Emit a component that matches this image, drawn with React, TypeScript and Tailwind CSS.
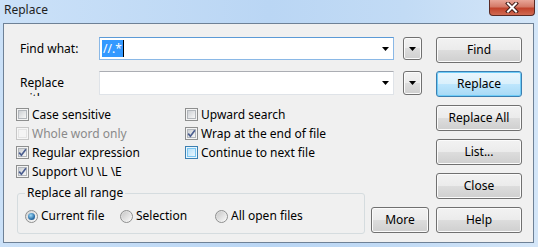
import React from 'react'

function Arrow() {
    return (
        <svg width="7" height="4" viewBox="0 0 7 4">
            <path d="M0 0 H7 L3.5 4 Z" fill="#000" />
        </svg>
    )
}

function Btn({ children, primary, className = "" }: { children: React.ReactNode; primary?: boolean; className?: string }) {
    return (
        <div
            className={`flex items-center justify-center rounded-[3px] border leading-none ${primary
                ? "border-[#3c7fb1] bg-[linear-gradient(to_bottom,#eaf6fd_0%,#d9f0fc_50%,#bee6fd_50%,#a7d9f5_100%)] shadow-[inset_0_0_0_1px_#6fcdf8]"
                : "border-[#707070] bg-[linear-gradient(to_bottom,#f2f2f2_0%,#ebebeb_50%,#dddddd_50%,#cfcfcf_100%)] shadow-[inset_0_0_0_1px_#fbfbfb]"
                } ${className}`}
        >
            {children}
        </div>
    )
}

function Check({ label, checked, disabled, hot }: { label: string; checked?: boolean; disabled?: boolean; hot?: boolean }) {
    const outer = disabled
        ? "border-[#c7c7c7] bg-[#f6f6f6]"
        : hot
            ? "border-[#3c7fb1] bg-[#eaf6fd]"
            : "border-[#8e8f8f] bg-[#f4f4f4]"
    const inner = disabled
        ? "border-[#e3e3e3] bg-[#f4f4f4]"
        : hot
            ? "border-[#7ac6f2] bg-[linear-gradient(135deg,#b7e0f9,#e9f6fe)]"
            : "border-[#b2b6bb] bg-[linear-gradient(135deg,#cdd0d4,#f7f7f7)]"
    return (
        <div className="flex h-[19px] items-center gap-[3px]">
            <span className={`relative flex h-[13px] w-[13px] shrink-0 items-center justify-center border ${outer}`}>
                <span className={`h-[9px] w-[9px] border ${inner}`} />
                {checked && (
                    <svg className="absolute inset-0" width="11" height="11" viewBox="0 0 11 11">
                        <path d="M2.2 5.6 L4.4 8.2 L8.9 2.2" fill="none" stroke="#4a5d8f" strokeWidth="1.7" />
                    </svg>
                )}
            </span>
            <span className={`leading-none ${disabled ? "text-[#8a8a8a]" : "text-black"}`}>{label}</span>
        </div>
    )
}

function Radio({ label, checked, className = "" }: { label: string; checked?: boolean; className?: string }) {
    return (
        <div className={`flex h-[16px] items-center gap-[3px] ${className}`}>
            <span className="flex h-[13px] w-[13px] shrink-0 items-center justify-center rounded-full border border-[#8e8f8f] bg-[linear-gradient(135deg,#d4d4d4,#fbfbfb)]">
                {checked ? (
                    <span className="h-[7px] w-[7px] rounded-full bg-[radial-gradient(circle_at_40%_35%,#9fdcfa,#2c6fa8_60%,#1b4a78)]" />
                ) : (
                    <span className="h-[9px] w-[9px] rounded-full bg-[linear-gradient(135deg,#c9c9c9,#f6f6f6)]" />
                )}
            </span>
            <span className="leading-none">{label}</span>
        </div>
    )
}

export default function App() {
    return (
        <div className="flex h-[247px] w-[538px] flex-col overflow-hidden bg-[linear-gradient(to_right,#cbe1f8,#bad6f4_50%,#c2dbf5_75%,#d4e6f8)] font-['Noto_Sans',sans-serif] text-[12px] text-black">
            {/* title bar */}
            <div className="flex h-[23px] shrink-0 items-start justify-between">
                <span className="pl-[4px] pt-[2px] leading-[16px] text-[#1e1e1e]">Replace</span>
                <div className="mr-[3px] flex h-[16px] w-[46px] items-center justify-center rounded-b-[4px] border border-t-0 border-[#5a2a24] bg-[linear-gradient(to_bottom,#e8a698_0%,#d47a68_45%,#c1432c_55%,#d06a52_100%)]">
                    <svg width="14" height="11" viewBox="0 0 14 11">
                        <path d="M3 1.5 L11 9.5 M11 1.5 L3 9.5" stroke="#3e1a16" strokeWidth="4" strokeLinecap="square" />
                        <path d="M3 1.5 L11 9.5 M11 1.5 L3 9.5" stroke="#fff" strokeWidth="2" strokeLinecap="square" />
                    </svg>
                </div>
            </div>

            {/* client area */}
            <div className="ml-[3px] mr-[4px] h-[220px] shrink-0 border border-[#6e8196] bg-[#f0f0f0] pl-[12px] pt-[13px]">
                <div className="flex">
                    <div className="flex w-[413px] flex-col">
                        <div className="flex h-[23px] items-center">
                            <span className="w-[83px] pl-[4px] leading-none">Find what:</span>
                            <div className="flex h-[23px] w-[295px] items-center border border-[#8ab8e6] border-t-[#5c9ad6] bg-white pl-[2px] pr-[4px]">
                                <span className="flex h-[17px] items-center bg-[#3399ff] px-[1px] leading-none text-white">//.*</span>
                                <span className="h-[17px] w-px bg-black" />
                                <span className="ml-auto flex"><Arrow /></span>
                            </div>
                            <Btn className="ml-[9px] h-[23px] w-[19px]"><Arrow /></Btn>
                        </div>

                        <div className="mt-[11px] flex h-[24px] items-start">
                            {/* the label is clipped by its control height in the original dialog */}
                            <span className="mt-[4px] h-[21px] w-[83px] overflow-hidden pl-[4px] leading-[16px]">Replace<br />with:</span>
                            <div className="flex h-[24px] w-[295px] items-center border border-[#dfe3e8] border-t-[#abadb3] bg-white pr-[4px]">
                                <span className="ml-auto flex"><Arrow /></span>
                            </div>
                            <Btn className="ml-[9px] h-[24px] w-[19px]"><Arrow /></Btn>
                        </div>

                        <div className="mt-[10px] grid grid-cols-[169px_1fr]">
                            <Check label="Case sensitive" />
                            <Check label="Upward search" />
                            <Check label="Whole word only" disabled />
                            <Check label="Wrap at the end of file" checked />
                            <Check label="Regular expression" checked />
                            <Check label="Continue to next file" hot />
                            <Check label="Support \U \L \E" checked />
                        </div>

                        <div className="mt-[4px] flex items-end">
                            <fieldset className="ml-[1px] w-[348px] rounded-[3px] border border-[#d5dcdf]">
                                <legend className="ml-[7px] px-[2px] leading-[16px]">Replace all range</legend>
                                <div className="flex pb-[9px] pl-[7px] pt-[7px]">
                                    <Radio label="Current file" checked className="w-[95px]" />
                                    <Radio label="Selection" className="w-[95px]" />
                                    <Radio label="All open files" />
                                </div>
                            </fieldset>
                            <Btn className="mb-[1px] ml-auto h-[26px] w-[58px]">More</Btn>
                        </div>
                    </div>

                    <div className="ml-[7px] flex w-[86px] flex-col gap-[8px]">
                        <Btn className="h-[26px]">Find</Btn>
                        <Btn className="h-[26px]" primary>Replace</Btn>
                        <Btn className="h-[26px]">Replace All</Btn>
                        <Btn className="h-[26px]">List...</Btn>
                        <Btn className="h-[26px]">Close</Btn>
                        <Btn className="h-[26px]">Help</Btn>
                    </div>
                </div>
            </div>
        </div>
    )
}
